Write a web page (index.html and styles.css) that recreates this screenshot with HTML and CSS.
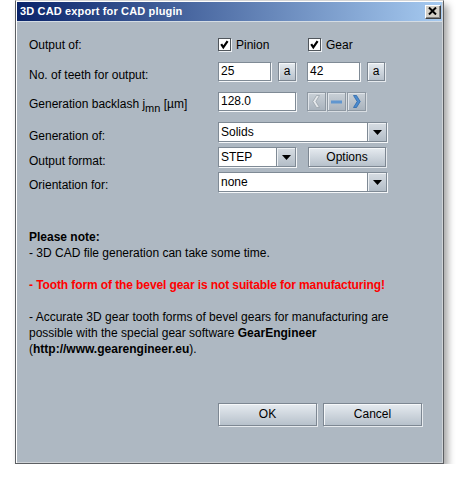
FILE: index.html
```html
<!DOCTYPE html>
<html>
<head>
<meta charset="utf-8">
<title>3D CAD export for CAD plugin</title>
<link rel="stylesheet" href="styles.css">
</head>
<body>
<div class="window">
  <div class="titlebar">
    <span class="title">3D CAD export for CAD plugin</span>
    <span class="close"><svg width="9" height="8" viewBox="0 0 9 8"><path d="M1 0.5 L8 7.5 M8 0.5 L1 7.5" stroke="#000" stroke-width="2" fill="none"/></svg></span>
  </div>
  <div class="content">
    <div class="form">
      <div class="row row-1">
        <span class="label lp-2">Output of:</span>
        <span class="check-item">
          <span class="checkbox"><svg width="11" height="11" viewBox="0 0 11 11"><path d="M2.2 5.2 L4.3 8.3 L8.6 2.2" stroke="#000" stroke-width="2.2" fill="none"/></svg></span>
          <span class="check-text">Pinion</span>
        </span>
        <span class="check-item">
          <span class="checkbox"><svg width="11" height="11" viewBox="0 0 11 11"><path d="M2.2 5.2 L4.3 8.3 L8.6 2.2" stroke="#000" stroke-width="2.2" fill="none"/></svg></span>
          <span class="check-text">Gear</span>
        </span>
      </div>
      <div class="row gap-6">
        <span class="label lp-6">No. of teeth for output:</span>
        <span class="field w-53">25</span>
        <span class="btn btn-small ml-7">a</span>
        <span class="field w-53 ml-11">42</span>
        <span class="btn btn-small ml-7">a</span>
      </div>
      <div class="row gap-10">
        <span class="label lp-5">Generation backlash j<sub>mn</sub> [µm]</span>
        <span class="field w-78">128.0</span>
        <span class="spin ml-11">
          <span class="spin-btn"><svg width="9" height="13" viewBox="0 0 9 13"><polygon points="7.5,0.5 4.5,0.5 0.8,6.5 4.5,12.5 7.5,12.5 3.8,6.5" fill="#e6e9ec" stroke="#9aa3ab" stroke-width="0.8"/></svg></span>
          <span class="spin-btn"><svg width="11" height="4" viewBox="0 0 11 4"><rect x="0" y="0.5" width="11" height="3" fill="#6096cf"/></svg></span>
          <span class="spin-btn"><svg width="9" height="13" viewBox="0 0 9 13"><polygon points="1.5,0.5 4.5,0.5 8.2,6.5 4.5,12.5 1.5,12.5 5.2,6.5" fill="#4b8bd0" stroke="#2f68a8" stroke-width="0.8"/></svg></span>
        </span>
      </div>
      <div class="row gap-10">
        <span class="label lp-7">Generation of:</span>
        <span class="combo w-169"><span class="combo-text">Solids</span><span class="combo-arrow"><svg width="9" height="5" viewBox="0 0 9 5"><polygon points="0,0 9,0 4.5,5" fill="#000"/></svg></span></span>
      </div>
      <div class="row gap-5">
        <span class="label lp-7">Output format:</span>
        <span class="combo w-78"><span class="combo-text">STEP</span><span class="combo-arrow"><svg width="9" height="5" viewBox="0 0 9 5"><polygon points="0,0 9,0 4.5,5" fill="#000"/></svg></span></span>
        <span class="btn btn-options ml-12">Options</span>
      </div>
      <div class="row gap-5">
        <span class="label lp-6">Orientation for:</span>
        <span class="combo w-169"><span class="combo-text">none</span><span class="combo-arrow"><svg width="9" height="5" viewBox="0 0 9 5"><polygon points="0,0 9,0 4.5,5" fill="#000"/></svg></span></span>
      </div>
    </div>
    <div class="notes">
      <p class="bold">Please note:</p>
      <p>- 3D CAD file generation can take some time.</p>
      <p class="blank">&nbsp;</p>
      <p class="warn">- Tooth form of the bevel gear is not suitable for manufacturing!</p>
      <p class="blank">&nbsp;</p>
      <p>- Accurate 3D gear tooth forms of bevel gears for manufacturing are</p>
      <p>possible with the special gear software <b>GearEngineer</b></p>
      <p>(<b>http://www.gearengineer.eu</b>).</p>
    </div>
    <div class="footer">
      <span class="btn btn-dialog">OK</span>
      <span class="btn btn-dialog">Cancel</span>
    </div>
  </div>
</div>
</body>
</html>
```
FILE: styles.css
```css
html, body {
  margin: 0;
  padding: 0;
  background: #ffffff;
}
body {
  font-family: "Liberation Sans", Arial, sans-serif;
  font-size: 12px;
  color: #000;
}
.window {
  margin-left: 15px;
  width: 429px;
  height: 464px;
  box-sizing: border-box;
  border: 1px solid #5c5f63;
  border-top-color: #d6d6d6;
  background: #aeb8c2;
  box-shadow: 4px 5px 7px rgba(0, 0, 0, 0.35), inset 1px 1px 0 #ffffff, inset -1px -1px 0 #cfd3d7;
  display: flex;
  flex-direction: column;
}
.titlebar {
  margin: 1px 1px 0 1px;
  height: 19px;
  background: linear-gradient(to right, #0a246a, #a6caf0);
  display: flex;
  align-items: center;
  justify-content: space-between;
  border-bottom: 1px solid #d4dce4;
}
.title {
  color: #ffffff;
  font-weight: bold;
  font-size: 11px;
  letter-spacing: 0.15px;
  padding-left: 3px;
  line-height: 19px;
}
.close {
  width: 16px;
  height: 14px;
  box-sizing: border-box;
  margin-right: 1px;
  background: #d4d0c8;
  border-top: 1px solid #ffffff;
  border-left: 1px solid #ffffff;
  border-right: 1px solid #404040;
  border-bottom: 1px solid #404040;
  box-shadow: inset -1px -1px 0 #808080;
  display: flex;
  align-items: center;
  justify-content: center;
}
.close svg { display: block; margin-top: -1px; margin-left: -1px; }
.content {
  flex: 1;
  display: flex;
  flex-direction: column;
  padding: 0 21px 37px 13px;
}
.form {
  padding-top: 14px;
  display: flex;
  flex-direction: column;
}
.row {
  display: flex;
  align-items: flex-start;
  height: 20px;
}
.gap-5 { margin-top: 5px; }
.gap-6 { margin-top: 6px; }
.gap-10 { margin-top: 10px; }
.label {
  width: 189px;
  flex: none;
  line-height: 14px;
  white-space: nowrap;
}
.label sub {
  font-size: 11px;
  line-height: 0;
  vertical-align: -4px;
}
.lp-2 { padding-top: 2px; }
.lp-5 { padding-top: 5px; }
.lp-6 { padding-top: 6px; }
.lp-7 { padding-top: 7px; }
.ml-7 { margin-left: 7px; }
.ml-11 { margin-left: 11px; }
.ml-12 { margin-left: 12px; }
.check-item {
  width: 90px;
  display: flex;
  align-items: flex-start;
}
.checkbox {
  width: 13px;
  height: 13px;
  box-sizing: border-box;
  margin-top: 2px;
  border: 1px solid #50565c;
  background: #ffffff;
  box-shadow: 1px 1px 0 #eef1f4;
  display: flex;
  align-items: center;
  justify-content: center;
}
.checkbox svg { display: block; }
.check-text {
  margin-left: 5px;
  padding-top: 2px;
  line-height: 14px;
}
.field {
  height: 19px;
  box-sizing: border-box;
  border: 1px solid #7f8a95;
  background: #ffffff;
  box-shadow: 1px 1px 0 #f4f6f8;
  padding-left: 2px;
  line-height: 17px;
  flex: none;
}
.w-53 { width: 53px; }
.w-78 { width: 78px; }
.w-169 { width: 169px; }
.btn {
  box-sizing: border-box;
  border: 1px solid #7d8792;
  background: linear-gradient(to bottom, #e6ebf0, #b7c1cb);
  box-shadow: 1px 1px 0 #e6eaee, inset 1px 1px 0 #f6f8fa;
  display: flex;
  align-items: center;
  justify-content: center;
  flex: none;
}
.btn-small {
  width: 18px;
  height: 19px;
  line-height: 17px;
}
.btn-options {
  width: 78px;
  height: 20px;
}
.btn-dialog {
  width: 99px;
  height: 23px;
  line-height: 21px;
}
.spin {
  display: flex;
  gap: 1px;
}
.spin-btn {
  width: 19px;
  height: 19px;
  box-sizing: border-box;
  border: 1px solid #8e98a2;
  background: linear-gradient(to bottom, #c9d0d7, #a9b3bd);
  box-shadow: 1px 1px 0 #d8dde2, inset 1px 1px 0 #dfe4e9;
  display: flex;
  align-items: center;
  justify-content: center;
}
.spin-btn svg { display: block; }
.combo {
  height: 20px;
  box-sizing: border-box;
  border: 1px solid #7f8a95;
  background: #ffffff;
  box-shadow: 1px 1px 0 #f4f6f8;
  display: flex;
  flex: none;
}
.combo-text {
  flex: 1;
  padding-left: 2px;
  padding-top: 1px;
  line-height: 17px;
}
.combo-arrow {
  width: 18px;
  border-left: 1px solid #7f8a95;
  background: linear-gradient(to bottom, #d7dde3, #b3bdc7);
  box-shadow: inset 1px 1px 0 #eef1f4;
  display: flex;
  align-items: center;
  justify-content: center;
}
.combo-arrow svg { display: block; margin-top: 1px; }
.notes {
  margin-top: 37px;
  padding-left: 0;
}
.notes p {
  margin: 0;
  line-height: 16px;
  white-space: nowrap;
}
.notes .bold { font-weight: bold; }
.notes .warn { font-weight: bold; color: #ff0000; letter-spacing: -0.1px; }
.footer {
  margin-top: auto;
  display: flex;
  justify-content: flex-end;
  gap: 6px;
}
```
